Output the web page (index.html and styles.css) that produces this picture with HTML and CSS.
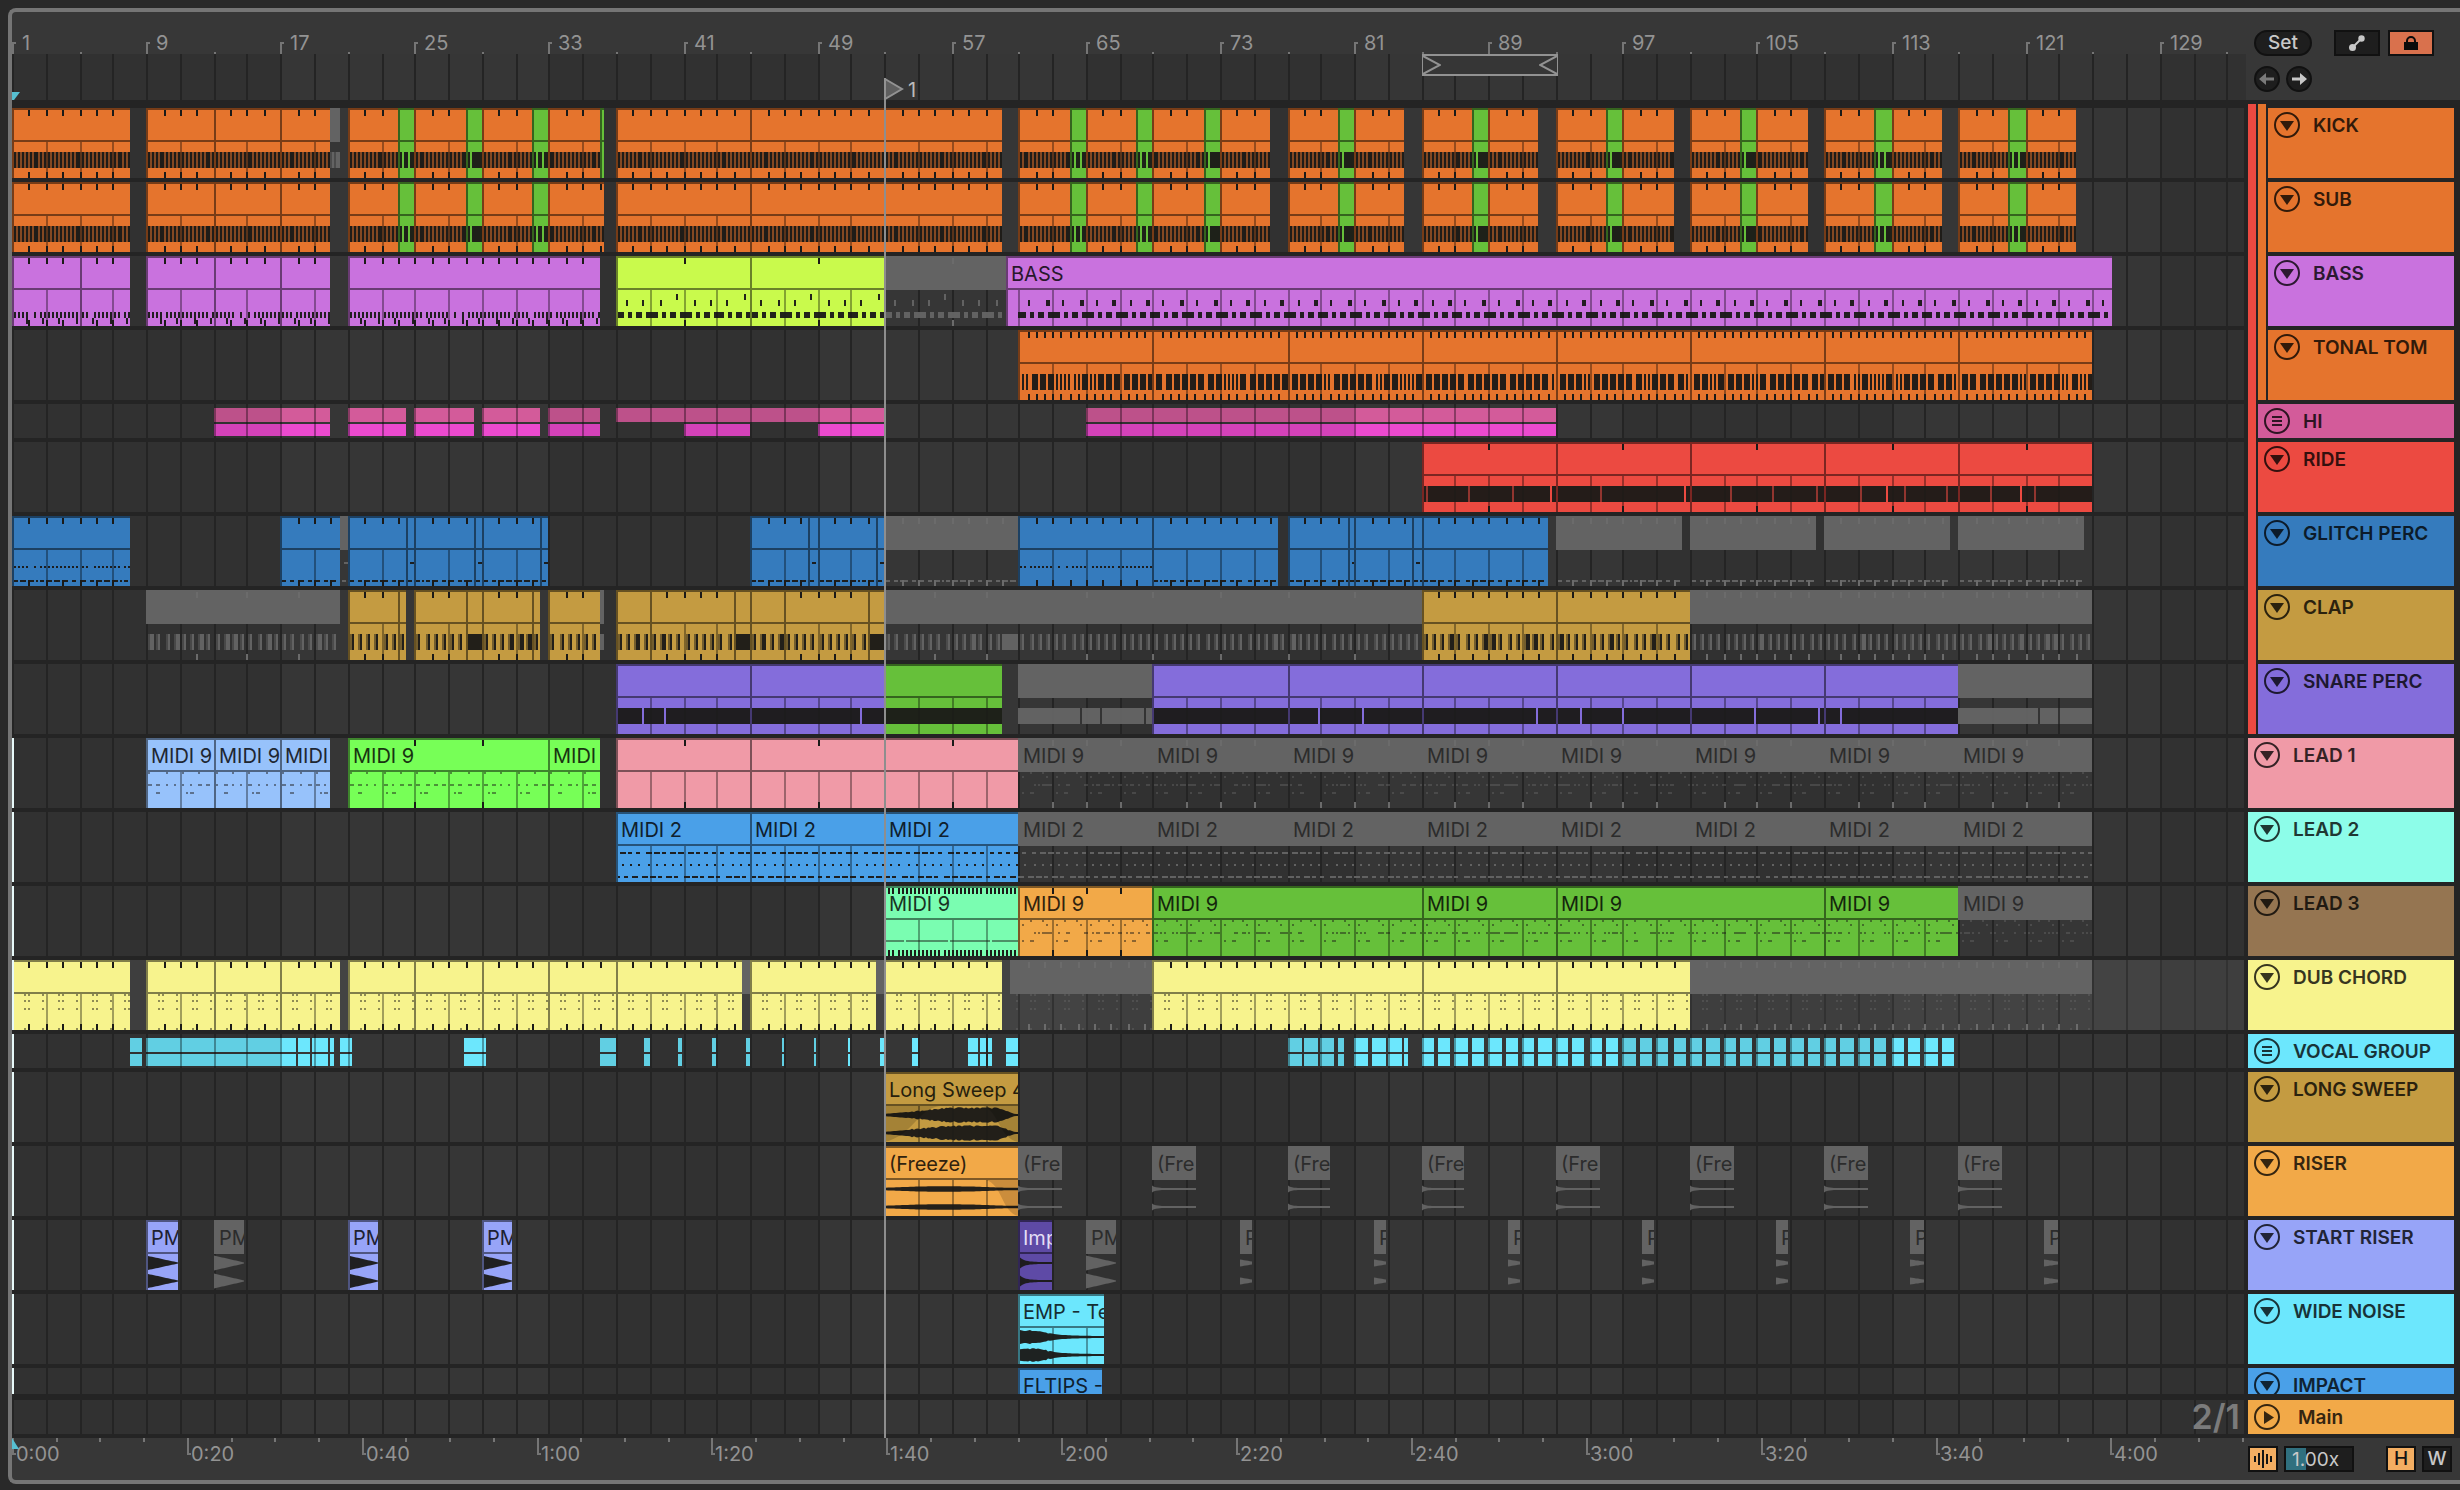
FILE: index.html
```html
<!DOCTYPE html>
<html lang="en">
<head>
  <meta charset="UTF-8">
  <title>Arrangement</title>
  <link rel="stylesheet" href="styles.css">
</head>
<body>
  <svg class="sprite" width="0" height="0" aria-hidden="true">
    <symbol id="fold" viewBox="0 0 26 26">
      <circle cx="13" cy="13" r="12" fill="none" stroke="currentColor" stroke-width="2"/>
      <path d="M6 9h14l-7 10z" fill="currentColor"/>
    </symbol>
    <symbol id="unfold" viewBox="0 0 26 26">
      <circle cx="13" cy="13" r="12" fill="none" stroke="currentColor" stroke-width="2"/>
      <path d="M10 7v13l10-6.500z" fill="currentColor"/>
    </symbol>
    <symbol id="group" viewBox="0 0 26 26">
      <circle cx="13" cy="13" r="12" fill="none" stroke="currentColor" stroke-width="2"/>
      <path d="M8 8h10v2H8zM8 12h10v2H8zM8 16h10v2H8z" fill="currentColor"/>
    </symbol>
  </svg>

  <main class="frame">
    <section class="timeline" id="timeline">
      <div class="ruler" id="beatRuler"></div>
      <div class="arrange">
        <svg class="grid" id="grid" width="100%" height="100%"></svg>
        <div class="scrub">
          <svg class="start" width="8" height="8"><path d="M0 0h8l-6 8H0z" fill="#57bfd1"/></svg>
          <div class="loop" id="loop">
            <svg width="18" height="18"><path d="M0 0l17 9L0 18" fill="none" stroke="#929292" stroke-width="2"/></svg>
            <svg width="18" height="18"><path d="M18 0L1 9l17 9" fill="none" stroke="#929292" stroke-width="2"/></svg>
          </div>
        </div>
        <div class="lanes" id="lanes"></div>
        <div class="lane main-lane"><span class="zoom">2/1</span></div>
      </div>
      <div class="ruler time" id="timeRuler">
        <svg class="start-time" width="8" height="12"><path d="M0 0l7 11H0z" fill="#57bfd1"/></svg>
      </div>
      <div class="locator" id="locator">
        <svg width="20" height="22"><path d="M1 1l17 10L1 21z" fill="#5f5f5f" stroke="#929292" stroke-width="2"/></svg>
        <span>1</span>
      </div>
    </section>

    <aside class="side">
      <div class="tools">
        <div class="tools-row">
          <button class="pill">Set</button>
          <button class="tool" aria-label="Automation mode">
            <svg width="18" height="18"><path d="M4 14L14 4" stroke="#c8c8c8" stroke-width="2"/><circle cx="4.500" cy="13.500" r="3.500" fill="#c8c8c8"/><circle cx="13.500" cy="4.500" r="3.200" fill="#c8c8c8"/></svg>
          </button>
          <button class="tool lock" aria-label="Lock envelopes">
            <svg width="18" height="18"><path d="M5 9V7a4 4 0 0 1 8 0v2" fill="none" stroke="#0b0b0b" stroke-width="2"/><path d="M2 8h14v8H2z" fill="#0b0b0b"/></svg>
          </button>
        </div>
        <div class="tools-row arrows">
          <button class="round dim" aria-label="Previous locator">
            <svg width="16" height="14"><path d="M0 7l7-6v4.500h8v3H7V13z" fill="currentColor"/></svg>
          </button>
          <button class="round" aria-label="Next locator">
            <svg width="16" height="14"><path d="M16 7L9 1v4.500H1v3h8V13z" fill="currentColor"/></svg>
          </button>
        </div>
      </div>

      <div class="headers">
        <div class="nest red">
          <div class="strip"></div>
          <div class="stack">
            <div class="nest orange">
              <div class="strip"></div>
              <div class="stack">
                <div class="track orange"><button aria-label="Fold KICK"><svg><use href="#fold"/></svg></button><span>KICK</span></div>
                <div class="track orange"><button aria-label="Fold SUB"><svg><use href="#fold"/></svg></button><span>SUB</span></div>
                <div class="track purple"><button aria-label="Fold BASS"><svg><use href="#fold"/></svg></button><span>BASS</span></div>
                <div class="track orange"><button aria-label="Fold TONAL TOM"><svg><use href="#fold"/></svg></button><span>TONAL TOM</span></div>
              </div>
            </div>
            <div class="track short pink"><button aria-label="Open HI"><svg><use href="#group"/></svg></button><span>HI</span></div>
            <div class="track red"><button aria-label="Fold RIDE"><svg><use href="#fold"/></svg></button><span>RIDE</span></div>
            <div class="track blue"><button aria-label="Fold GLITCH PERC"><svg><use href="#fold"/></svg></button><span>GLITCH PERC</span></div>
            <div class="track gold"><button aria-label="Fold CLAP"><svg><use href="#fold"/></svg></button><span>CLAP</span></div>
            <div class="track violet"><button aria-label="Fold SNARE PERC"><svg><use href="#fold"/></svg></button><span>SNARE PERC</span></div>
          </div>
        </div>
        <div class="track rose"><button aria-label="Fold LEAD 1"><svg><use href="#fold"/></svg></button><span>LEAD 1</span></div>
        <div class="track aqua"><button aria-label="Fold LEAD 2"><svg><use href="#fold"/></svg></button><span>LEAD 2</span></div>
        <div class="track brown"><button aria-label="Fold LEAD 3"><svg><use href="#fold"/></svg></button><span>LEAD 3</span></div>
        <div class="track yellow"><button aria-label="Fold DUB CHORD"><svg><use href="#fold"/></svg></button><span>DUB CHORD</span></div>
        <div class="track short cyan"><button aria-label="Open VOCAL GROUP"><svg><use href="#group"/></svg></button><span>VOCAL GROUP</span></div>
        <div class="track gold"><button aria-label="Fold LONG SWEEP"><svg><use href="#fold"/></svg></button><span>LONG SWEEP</span></div>
        <div class="track amber"><button aria-label="Fold RISER"><svg><use href="#fold"/></svg></button><span>RISER</span></div>
        <div class="track lilac"><button aria-label="Fold START RISER"><svg><use href="#fold"/></svg></button><span>START RISER</span></div>
        <div class="track cyan"><button aria-label="Fold WIDE NOISE"><svg><use href="#fold"/></svg></button><span>WIDE NOISE</span></div>
        <div class="track cut sky"><button aria-label="Fold IMPACT"><svg><use href="#fold"/></svg></button><span>IMPACT</span></div>
        <div class="track short main amber"><button aria-label="Unfold Main"><svg><use href="#unfold"/></svg></button><span>Main</span></div>
      </div>

      <div class="footer">
        <button class="small on" aria-label="Waveform zoom">
          <svg width="20" height="20"><path d="M1 7h2v6H1zM5 4h2v12H5zM9 1h2v18H9zM13 5h2v10h-2zM17 7h2v6h-2z" fill="#151515"/></svg>
        </button>
        <input class="speed" type="text" value="1.00x" aria-label="Waveform zoom factor">
        <button class="small on push">H</button>
        <button class="small">W</button>
      </div>
    </aside>
  </main>
  <script src="script.js"></script>
</body>
</html>
```
FILE: styles.css
```css
* {
  box-sizing: border-box;
}
body {
  margin: 0;
  background: #292929;
  color: #939393;
  font-family: Inter, "Liberation Sans", sans-serif;
  font-size: 20px;
  line-height: 26px;
}
button, input {
  font: inherit;
  margin: 0;
  padding: 0;
}
button {
  cursor: pointer;
}
.sprite {
  position: absolute;
}
.frame {
  display: grid;
  grid-template-columns: minmax(0, 1fr) 214px;
  margin: 8px 0 6px 8px;
  border: 4px solid #757575;
  border-right: 0;
  border-radius: 8px 0 0 8px;
  background: #373737;
  overflow: hidden;
}

/* colours */
.orange { --c: #e5742d; }
.purple { --c: #c972de; }
.pink { --c: #d35b9a; }
.red { --c: #ec4a41; }
.blue { --c: #357bbd; }
.gold { --c: #c49b41; }
.violet { --c: #846ddb; }
.rose { --c: #f09aa7; }
.aqua { --c: #8dfde9; }
.brown { --c: #957551; }
.yellow { --c: #f7f38d; }
.cyan { --c: #6ce7fd; }
.amber { --c: #f2a948; }
.lilac { --c: #97a4f8; }
.sky { --c: #4aa0e8; }
.lime { --c: #c9fa4c; }
.green { --c: #66c03a; }
.bright { --c: #77ff57; }
.pale { --c: #97c2fb; }
.mint { --c: #7afdb1; }
.indigo { --c: #5e4aa6; }

/* timeline */
.timeline {
  position: relative;
}
.ruler {
  position: relative;
  height: 42px;
  overflow: hidden;
}
.mark {
  position: absolute;
  top: 30px;
  width: 4px;
  height: 12px;
  border-left: 2px solid #757575;
  border-top: 2px solid #757575;
}
.minor {
  position: absolute;
  top: 40px;
  width: 2px;
  height: 2px;
  background: #757575;
}
.mark span {
  position: absolute;
  left: 8px;
  top: -14px;
}
.time .mark {
  top: 0;
  height: 17px;
  border-top: 0;
  border-bottom: 2px solid #757575;
}
.time .minor {
  top: 0;
  height: 4px;
}
.time .mark span {
  left: 2px;
  top: 3px;
}
.start-time {
  position: absolute;
  left: 0;
  top: 0;
}
.arrange {
  position: relative;
}
.grid {
  position: absolute;
  inset: 0;
}
.scrub {
  position: relative;
  height: 46px;
}
.start {
  position: absolute;
  left: 0;
  bottom: 0;
}
.loop {
  position: absolute;
  top: 0;
  display: flex;
  justify-content: space-between;
  height: 22px;
  border: 2px solid #929292;
  border-width: 2px 1px;
  background: #363636;
}
.lanes {
  position: relative;
  border-top: 8px solid #242424;
}
.lane {
  position: relative;
  box-sizing: content-box;
  height: 70px;
  border-bottom: 4px solid #242424;
  border-right: 2px solid #242424;
  overflow: hidden;
}
.lane.short, .main-lane {
  height: 34px;
}
.lane.cut {
  height: 26px;
  border-bottom-width: 6px;
}
.lane.picked {
  background: rgba(255, 255, 255, .065);
}
.lane.open::before {
  content: "";
  position: absolute;
  z-index: 1;
  inset: 0 auto 0 0;
  width: 2px;
  background: #e8fafa;
}
.main-lane {
  text-align: right;
}
.zoom {
  display: block;
  padding-right: 4px;
  font-size: 34px;
  line-height: 34px;
  font-weight: 600;
  color: #7b7b7b;
}
.clip {
  position: absolute;
  top: 0;
  bottom: 0;
  overflow: hidden;
  background: var(--c);
  color: color-mix(in srgb, var(--c) 20%, black);
  white-space: nowrap;
}
.clip svg {
  position: absolute;
  inset: 0;
}
.clip span {
  position: relative;
  display: block;
  padding-left: 5px;
  line-height: 36px;
}
.clip.indigo {
  color: #e3def5;
}
.edge { fill: color-mix(in srgb, var(--c) 52%, #000); }
.lines { fill: #000; opacity: .35; }
.ink { fill: #1b1a18; opacity: .96; }
.soft { fill: #1b1a18; opacity: .48; }
.lit { fill: var(--c); }
.dimlit { fill: var(--c); opacity: .55; }
.fade { fill: #000; opacity: .16; }
.shade { fill: #000; opacity: .1; }
.tick { fill: #1b1a18; }
.clip.off {
  background: linear-gradient(#636363 34px, transparent 34px);
  color: #2c2c2c;
}
.off .tick { fill: #6b6b6b; }
.off .ink { fill: #646464; }
.off .soft { fill: #626262; }
.off .lit, .off .dimlit { fill: #333; }
.clip.folder {
  background: none;
}
.folder .lower { fill: var(--lower, var(--c)); }
.folder .upper { fill: var(--c); }
.folder.pink { --lower: #ec4acf; }

.locator {
  position: absolute;
  top: 66px;
  bottom: 42px;
  display: flex;
  gap: 4px;
  border-left: 2px solid #8e8e8e;
  line-height: 24px;
  color: #bbb;
  pointer-events: none;
}
.locator svg {
  margin-left: -2px;
}

/* right column */
.side {
  display: flex;
  flex-direction: column;
  font-size: 19px;
}
.tools {
  height: 88px;
  padding: 18px 8px 0;
}
.tools-row {
  display: flex;
  gap: 8px;
}
.arrows {
  gap: 6px;
  margin-top: 10px;
}
.pill, .tool, .round, .small, .speed {
  display: flex;
  align-items: center;
  justify-content: center;
  height: 26px;
  border: 2px solid #111;
  background: #1e1e1e;
  color: #c8c8c8;
  line-height: 22px;
}
.pill {
  width: 58px;
  margin-right: 14px;
  border-radius: 13px;
  font-weight: 500;
}
.tool {
  width: 46px;
}
.lock {
  background: #d9714d;
}
.round {
  width: 26px;
  border-radius: 13px;
}
.dim {
  color: #7a7a7a;
}
.headers {
  display: flex;
  flex-direction: column;
  gap: 4px;
  padding: 8px 6px 4px 2px;
  background: #242424;
}
.nest {
  display: flex;
  gap: 2px;
}
.strip {
  width: 8px;
  margin-top: -4px;
  background: var(--c);
}
.stack {
  flex: 1;
  display: flex;
  flex-direction: column;
  gap: 4px;
}
.track {
  display: flex;
  gap: 13px;
  height: 70px;
  padding: 4px 0 0 6px;
  overflow: hidden;
  background: var(--c);
  color: color-mix(in srgb, var(--c) 22%, black);
  font-weight: 600;
  line-height: 28px;
  white-space: nowrap;
}
.track.short {
  height: 34px;
}
.track.cut {
  height: 26px;
}
.track.main {
  gap: 18px;
  margin-top: 2px;
}
.track button {
  width: 26px;
  height: 26px;
  border: 0;
  background: none;
  color: inherit;
}
.track svg {
  display: block;
  width: 26px;
  height: 26px;
}
.footer {
  display: flex;
  gap: 6px;
  padding: 8px 8px 8px 2px;
}
.small {
  width: 30px;
  font-weight: 500;
}
.on {
  background: #f4ae62;
  color: #151515;
}
.push {
  margin-left: auto;
}
.speed {
  width: 70px;
  padding-left: 6px;
  background: linear-gradient(90deg, #30707f 20px, #1e1e1e 20px);
}
```
FILE: script.js
```js
const BARS = 133.15;      // bars visible in the timeline
const SECONDS = 255.5;    // seconds visible in the timeline
let unit = 16;

// bar number -> x, kept on the 2px raster
const px = bar => 2 * Math.round((bar - 1) * unit / 2);
const rect = (x, y, w, h) => `M${x} ${y}h${w}v${h}h${-w}z`;
const rnd = n => {
  const v = Math.sin(n * 12.9898) * 43758.5453;
  return v - Math.floor(v);
};

// note patterns, add(bar, y, w, h, kind, dx)
const patterns = {
  kick(a, z, add) {
    add(a, 44, px(z) - px(a), 16, 'soft');
    for (let b = a; b < z; b += .25) add(b, 44, px(b + .25) - px(b) - 2, 16, 'ink', 2);
  },
  fill(a, z, add) {
    add(a, 44, px(z) - px(a), 16, 'ink');
  },
  gap1(a, z, add) {
    patterns.fill(a, z, add);
    add(a, 44, 2, 16, 'lit', 4);
  },
  gap2(a, z, add) {
    patterns.gap1(a, z, add);
    add(a, 44, 2, 16, 'lit', 10);
  },
  bassA(a, z, add) {
    for (let b = a; b < z; b += .25) if (rnd(b) > .08) add(b, 56, 2, 6, 'ink', 2);
    for (let b = Math.ceil(a); b < z; b++) add(b + .8, 62, 2, 6, 'ink');
  },
  bassB(a, z, add) {
    for (let b = a; b < z; b++) {
      add(b + .6, (b - a) % 4 == 3 ? 38 : 44, 2, 6, 'ink');
    }
    low(a, z, add);
  },
  bassC(a, z, add) {
    for (let b = 61; b < z; b++) add(b + .6, 44, b % 2 ? 2 : 4, 6, 'ink');
    low(61, z, add);
  },
  tom(a, z, add) {
    for (let b = a; b < z; b += .5) {
      const r = rnd(b);
      if (r < .12) { add(b, 44, 2, 16, 'ink', 4); add(b, 44, 2, 16, 'ink', 8); }
      else add(b, 44, 6, 16, 'ink', 4);
    }
  },
  ride(a, z, add) {
    patterns.fill(a, z, add);
    [85.3, 87.8, 90.4, 95.7, 103.4, 105.9, 108.5, 111.2, 113.8, 116.3, 118.9, 121.5]
      .forEach(b => b >= a && b < z && add(b, 44, 2, 16, 'dimlit'));
    [92.7, 100.7, 112.7, 120.7].forEach(b => b >= a && b < z && add(b, 44, 2, 16, 'lit'));
  },
  snare(a, z, add) {
    patterns.fill(a, z, add);
    [38.6, 39.9, 51.6, 53, 64.6, 65.9, 68.5, 78.8, 81.5, 91.8, 94.5, 97, 104.8, 108.6, 109.9, 121.7, 123]
      .forEach(b => b > a && b < z && add(b, 44, 2, 16, 'lit'));
  },
  dots(a, z, add) {
    for (let b = a; b < z; b += .25) if (rnd(b) > .08) add(b, 50, 2, 2, 'ink', 2);
  },
  perc(a, z, add) {
    for (let b = a; b < z; b += .5) {
      add(b, 64, 4, 2, 'ink', 2);
      if (rnd(b * 3) > .5) add(b, 64, 2, 2, 'ink', 8);
    }
  },
  both(a, z, add) {
    patterns.dots(a, z, add);
    patterns.perc(a, z, add);
  },
  blip(a, z, add) {
    add(a, 46, 4, 2, 'ink', 4);
    patterns.perc(a, z, add);
  },
  clap(a, z, add) {
    for (let b = a; b < z; b += .5) {
      const dense = rnd(b * 7) < .12;
      add(b, 44, 2, 16, 'soft', 2);
      add(b, 44, dense ? 4 : 2, 16, 'ink', 4);
    }
  },
  blue(a, z, add) {
    for (let b = a; b < z; b += .5) {
      add(b, 46, rnd(b) > .6 ? 2 : 4, 2, 'soft', 2);
      if (b % 1 == 0) add(b, 34, 2, 2, 'soft', 2);
      if (b % 2 == 1) add(b, 54, 4, 2, 'soft', 10);
      if (b % 2 == .5) add(b, 54, 2, 2, 'soft', 14);
    }
  },
  lead(a, z, add) {
    for (let b = a; b < z; b += .25) {
      if (rnd(b) > .3) add(b, 46, rnd(b * 2) > .7 ? 4 : 2, 2, 'soft', 2);
    }
    for (let b = a; b < z; b++) {
      add(b, 38, 2, 2, 'soft', b % 2 ? 4 : 10);
      add(b, 34, 2, 2, 'soft', b % 2 ? 12 : 6);
      if (b % 2) add(b, 54, 2, 2, 'soft', 4);
      if (b % 2) add(b, 54, 4, 2, 'soft', 12);
    }
  },
  lead2(a, z, add) {
    for (let b = a; b < z; b += .5) {
      add(b, 40, rnd(b) > .5 ? 6 : 4, 2, 'ink', 4);
      add(b, 52, 2, 2, 'ink', 6);
      add(b, 64, rnd(b * 5) > .4 ? 6 : 4, 2, 'ink', 0);
    }
  },
  hold(a, z, add) {
    add(a, 54, 18, 2, 'soft', 2);
    add(a, 54, 42, 2, 'soft', 22);
    add(a, 54, 40, 2, 'soft', 66);
    add(a, 54, 26, 2, 'soft', 108);
  },
  chord(a, z, add) {
    for (let b = a - (a - 1) % 2; b < z; b += 2) {
      [12, 16, 30].forEach(dx => [34, 40, 48].forEach(y => add(b, y, 2, 2, 'soft', dx)));
      [12, 30].forEach(dx => add(b, 68, 2, 2, 'soft', dx));
    }
  }
};

function low(a, z, add) {
  for (let b = a; b < z; b += 2) {
    add(b, 56, 8, 6, 'ink');
    add(b, 56, 4, 6, 'ink', 12);
    add(b, 56, 6, 6, 'ink', 20);
    add(b, 56, 4, 6, 'ink', 30);
  }
}

// amplitude of the audio clips, t runs 0..1
const waves = {
  sweep: t => t < .5 ? 1 + t * 12 : t < .85 ? 7 : Math.max(1, 7 - (t - .85) * 48),
  freeze: t => 1.200 + 1.600 * Math.sin(Math.min(1, t * 1.100) * Math.PI),
  hit: t => 1 + 2.500 * Math.exp(-t * 14),
  pm: t => 7 * (1 - t) + .500,
  imp: t => 1 + 7 * Math.exp(-t * 7),
  p: t => 3.500 - 2 * t,
  emp: t => t < .25 ? 6.500 : 1 + 5.500 * Math.exp(-(t - .25) * 6)
};

function wave(name, w) {
  let d = '';
  [43, 61].forEach(mid => {
    const up = [], down = [];
    for (let x = 0; x <= w; x += 2) {
      let amp = waves[name](x / w);
      if (amp > 3 && (name == 'sweep' || name == 'emp')) amp += rnd(x + mid) * 1.5 - .7;
      up.push(`${x} ${(mid - amp).toFixed(1)}`);
      down.unshift(`${x} ${(mid + amp).toFixed(1)}`);
    }
    d += 'M' + up.concat(down).join('L') + 'z';
  });
  let svg = `<path class="ink" d="${d}"/>`;
  if (name == 'sweep') {
    svg += `<path class="fade" d="M0 34H${w * .42}C${w * .25} 36 ${w * .22} 64 0 70z"/>`;
    svg += `<path class="fade" d="M${w} 34H${w * .74}C${w * .85} 38 ${w * .86} 66 ${w} 70z"/>`;
  }
  if (name == 'freeze') svg += `<path class="fade" d="M${w} 34H${w * .76}C${w * .88} 38 ${w * .88} 66 ${w} 70z"/>`;
  return svg;
}

// clip: start, end, colour, pattern, tick step, title
const c = (a, z, color, notes, tick, title) => ({ a, z, color, notes, tick, title });
const run = (starts, z, ...rest) => starts.map((a, i) => c(a, starts[i + 1] || z, ...rest));
const eights = (from, to) => {
  const list = [];
  for (let b = from; b < to; b += 8) list.push(b);
  return list;
};

function drums(kick) {
  const list = [c(1, 8, 'orange', 'kick', 1), ...run([9, 13, 17], 20, 'orange', 'kick', 1)];
  if (kick) list.push(c(20, 20.6, 'off', 'kick'));
  const greens = { 24: 'gap2', 28: 'gap1', 32: 'gap2', 64: 'gap2', 68: 'gap2', 72: 'gap1', 80: 'gap1', 88: 'gap1', 96: 'gap1', 104: 'gap1', 112: 'gap2', 120: 'gap2' };
  Object.keys(greens).map(Number).forEach(g => {
    list.push(c(g - 3, g, 'orange', 'kick', 1), c(g, g + 1, 'green', greens[g]));
  });
  list.push(c(33, 36.25, 'orange', 'kick', 1));
  if (kick) list.push(c(36, 36.25, 'green'));
  list.push(c(37, 45, 'orange', 'kick', 1), c(45, 60, 'orange', 'kick', 1), c(73, 76, 'orange', 'kick', 1));
  [81, 89, 97, 105, 113, 121].forEach(b => list.push(c(b, b + 3, 'orange', 'kick', 1)));
  return list;
}

const vocals = [
  [8, 8.75], [9, 17.95], [18.05, 18.8], [18.9, 19.85], [20, 20.2], [20.55, 21.3], [27.95, 29.3], [36.05, 37],
  [38.7, 39], [40.75, 40.9], [42.7, 43], [44.8, 45], [46.85, 47.05], [48.75, 48.9], [50.8, 51], [52.75, 53],
  [54.7, 55.05], [58, 58.6], [58.75, 59.1], [59.2, 59.35], [60.3, 61], [77, 77.9], [78.05, 78.8], [78.9, 79.85],
  [80, 80.35], [81, 81.85], [82, 82.85], [83, 83.9], [84, 84.25]
];
for (let b = 85; b < 117; b++) vocals.push([b, b + .75]);

const tracks = [
  { clips: drums(true) },
  { clips: drums(false) },
  { clips: [
    ...run([1, 5], 8, 'purple', 'bassA', 1), ...run([9, 13, 17], 20, 'purple', 'bassA', 1),
    c(21, 36, 'purple', 'bassA', 1), ...run([37, 45], 53, 'lime', 'bassB', 4),
    c(53, 60.2, 'off', 'bassB', 4), c(60.2, 126.2, 'purple', 'bassC', 0, 'BASS')
  ] },
  { clips: run(eights(61, 125), 125, 'orange', 'tom', .5) },
  { size: 'short', folder: 'pink', spans: [
    [13, 20], [21, 24.5], [25, 28.5], [29, 32.5], [33, 36],
    [37, 41, 1], [41, 45], [45, 49, 1], [49, 53], [65, 93]
  ] },
  { clips: run(eights(85, 125), 125, 'red', 'ride', 4) },
  { clips: [
    c(1, 8, 'blue', 'both', 1), c(17, 20.55, 'blue', 'perc', 1), c(20.55, 21, 'off', 'blip'),
    c(21, 24.5, 'blue', 'perc', 1), c(24.5, 25, 'blue', 'blip'),
    c(25, 28.5, 'blue', 'perc', 1), c(28.5, 29, 'blue', 'blip'),
    c(29, 32.5, 'blue', 'perc', 1), c(32.5, 33, 'blue', 'blip'),
    c(45, 48.5, 'blue', 'perc', 1), c(48.5, 49, 'blue', 'blip'),
    c(49, 52.5, 'blue', 'perc', 1), c(52.5, 53, 'blue', 'blip'), c(53, 61, 'off', 'perc', 1),
    c(61, 69, 'blue', 'dots', 1), c(69, 76.5, 'blue', 'perc', 1),
    c(77, 80.6, 'blue', 'perc', 1), c(80.6, 81, 'blue', 'blip'),
    c(81, 84.5, 'blue', 'perc', 1), c(84.5, 85, 'blue', 'blip'), c(85, 92.5, 'blue', 'perc', 1),
    ...[93, 101, 109, 117].map(b => c(b, b + 7.5, 'off', 'perc', 1))
  ] },
  { clips: [
    c(9, 20.6, 'off', 'clap', 3), c(21, 24, 'gold', 'clap', 1), c(24, 24.5, 'gold', 'clap'),
    c(25, 28, 'gold', 'clap', 1), c(28, 29, 'gold', 'fill'), c(29, 32, 'gold', 'clap', 1), c(32, 32.5, 'gold', 'clap'),
    c(33, 36, 'gold', 'clap', 1), c(36, 36.25, 'off', 'fill'),
    c(37, 39, 'gold', 'clap'), c(39, 44, 'gold', 'clap', 1), c(44, 45, 'gold', 'fill'),
    c(45, 47, 'gold', 'clap'), c(47, 52, 'gold', 'clap', 1), c(52, 53, 'gold', 'fill'),
    c(53, 60, 'off', 'clap', 3), c(60, 61, 'off', 'fill'), c(61, 85, 'off', 'clap', 4),
    ...run([85, 93], 101, 'gold', 'clap', 1), ...run([101, 109, 117], 125, 'off', 'clap', 1)
  ] },
  { clips: [
    ...run([37, 45], 53, 'violet', 'snare'), c(53, 60, 'green', 'fill'), c(61, 69, 'off', 'snare'),
    ...run(eights(69, 117), 117, 'violet', 'snare'), c(117, 125, 'off', 'snare')
  ] },
  { open: true, clips: [
    ...run([9, 13, 17], 20, 'pale', 'blue', 0, 'MIDI 9'), c(21, 33, 'bright', 'blue', 4, 'MIDI 9'),
    c(33, 36, 'bright', 'blue', 0, 'MIDI 9'), ...run([37, 45, 53], 61, 'rose', '', 4),
    ...run(eights(61, 125), 125, 'off', 'lead', 2, 'MIDI 9')
  ] },
  { open: true, clips: [
    ...run([37, 45, 53], 61, 'sky', 'lead2', 0, 'MIDI 2'),
    ...run(eights(61, 125), 125, 'off', 'lead2', 0, 'MIDI 2')
  ] },
  { open: true, clips: [
    c(53, 61, 'mint', 'hold', .25, 'MIDI 9'), c(61, 69, 'amber', 'lead', 2, 'MIDI 9'),
    ...run([69, 85, 93, 109], 117, 'green', 'lead', 0, 'MIDI 9'), c(117, 125, 'off', 'lead', 0, 'MIDI 9')
  ] },
  { open: true, picked: true, clips: [
    c(1, 8, 'yellow', 'chord', 1), ...run([9, 13, 17], 20.6, 'yellow', 'chord', 1),
    ...run([21, 25, 29, 33], 37, 'yellow', 'chord', 1), c(37, 44.5, 'yellow', 'chord', 1), c(44.5, 45, 'off'),
    c(45, 52.5, 'yellow', 'chord', 1), c(52.5, 53, 'off'), c(53, 60, 'yellow', 'chord', 1),
    c(60.5, 69, 'off', 'chord', 1), ...run([69, 85, 93], 101, 'yellow', 'chord', 1), c(101, 125, 'off', 'chord', 1)
  ] },
  { open: true, size: 'short', folder: 'cyan', spans: vocals },
  { open: true, clips: [c(53, 61, 'gold', 'sweep', 0, 'Long Sweep 4')] },
  { open: true, clips: [
    c(53, 61, 'amber', 'freeze', 0, '(Freeze)'),
    ...eights(61, 125).map(b => c(b, b + 2.6, 'off', 'hit', 0, '(Fre'))
  ] },
  { open: true, clips: [
    ...[9, 21, 29].map(b => c(b, b + 1.85, 'lilac', 'pm', 0, 'PM')), c(13, 14.8, 'off', 'pm', 0, 'PM'),
    c(61, 63, 'indigo', 'imp', 0, 'Imp'), c(65, 66.8, 'off', 'pm', 0, 'PM'),
    ...eights(74.15, 125).map(b => c(b, b + .75, 'off', 'p', 0, 'P'))
  ] },
  { open: true, clips: [c(61, 66.1, 'cyan', 'emp', 0, 'EMP - Te')] },
  { open: true, size: 'cut', clips: [c(61, 66, 'sky', '', 0, 'FLTIPS -')] }
];

function inner(a, z, step) {
  const list = [];
  for (let b = a + step; b < z - .05; b += step) list.push(b);
  return list;
}

function gridLines(a, z, y, h) {
  let d = '';
  for (let b = 1; b < z; b += 2) if (b > a) d += rect(px(b) - px(a), y, 2, h);
  return d;
}

function drawClip(clip) {
  const { a, z, color, notes, tick, title } = clip;
  const w = px(z) - px(a);
  const off = color == 'off';
  let svg = '';
  if (!off) {
    svg += `<path class="lines" d="${gridLines(a, z, 34, 36)}"/>`;
  }
  if (patterns[notes]) {
    patterns[notes](a, z, (bar, y, nw, h, kind, dx = 0) => {
      svg += `<path class="${kind}" d="${rect(px(bar) - px(a) + dx, y, nw, h)}"/>`;
    });
  }
  if (waves[notes]) svg += wave(notes, w);
  if (!off) svg += `<path class="edge" d="${rect(0, 0, w, 2)}${rect(0, 2, 2, 68)}${rect(2, 32, w, 2)}"/>`;
  if (tick) {
    const d = inner(a, z, tick).map(b => rect(px(b) - px(a), 2, 2, 6) + rect(px(b) - px(a), 64, 2, 6)).join('');
    svg += `<path class="tick" d="${d}"/>`;
  }
  return `<div class="clip ${color}" style="left:${px(a)}px;width:${w}px">` +
    `<svg width="${w}" height="70">${svg}</svg>${title ? `<span>${title}</span>` : ''}</div>`;
}

function drawFolder(color, [a, z, single]) {
  const w = px(z) - px(a);
  const body = (y, h, cls) => {
    let out = `<path class="${cls}" d="${rect(0, y, w, h)}"/>`;
    for (let b = 1; b < z; b += 32) {
      const from = Math.max(a, b), to = Math.min(z, b + 16);
      if (to > from) out += `<path class="shade" d="${rect(px(from) - px(a), y, px(to) - px(from), h)}"/>`;
    }
    let d = '';
    for (let b = 1; b < z; b += 2) if (b >= a) d += rect(px(b) - px(a), y, 2, h);
    return out + `<path class="lines" d="${d}"/>`;
  };
  const svg = body(4, 14, 'upper') + (single ? '' : body(20, 12, 'lower'));
  return `<div class="clip folder ${color}" style="left:${px(a)}px;width:${w}px"><svg width="${w}" height="34">${svg}</svg></div>`;
}

function render() {
  const width = document.getElementById('timeline').clientWidth;
  unit = width / BARS;

  let grid = '';
  for (let b = 1; b < BARS + 1; b += 16) {
    const fill = (b - 1) % 32 ? '#363636' : '#313131';
    grid += `<rect x="${px(b)}" width="${px(b + 16) - px(b)}" height="100%" fill="${fill}"/>`;
  }
  for (let b = 1; b < BARS + 1; b += 2) {
    grid += `<rect x="${px(b)}" width="2" height="100%" fill="#242424"/>`;
  }
  document.getElementById('grid').innerHTML = grid;

  let marks = '';
  for (let b = 1; b < BARS; b += 4) {
    marks += (b - 1) % 8
      ? `<div class="minor" style="left:${px(b)}px"></div>`
      : `<div class="mark" style="left:${px(b)}px"><span>${b}</span></div>`;
  }
  document.getElementById('beatRuler').innerHTML = marks;

  document.querySelectorAll('.time div').forEach(el => el.remove());
  let times = '';
  for (let s = 0; s < SECONDS; s += 5) {
    const x = Math.round(s / SECONDS * width);
    const label = Math.floor(s / 60) + ':' + String(s % 60).padStart(2, '0');
    times += s % 20
      ? `<div class="minor" style="left:${x}px"></div>`
      : `<div class="mark" style="left:${x}px"><span>${label}</span></div>`;
  }
  document.getElementById('timeRuler').insertAdjacentHTML('afterbegin', times);

  document.getElementById('lanes').innerHTML = tracks.map(t => {
    const cls = ['lane', t.size, t.open && 'open', t.picked && 'picked'].filter(Boolean).join(' ');
    const body = t.folder ? t.spans.map(s => drawFolder(t.folder, s)) : t.clips.map(drawClip);
    return `<div class="${cls}">${body.join('')}</div>`;
  }).join('');

  const loop = document.getElementById('loop');
  loop.style.left = px(85) + 'px';
  loop.style.width = px(93) - px(85) + 2 + 'px';
  document.getElementById('locator').style.left = px(53) + 'px';
}

render();
window.addEventListener('resize', render);
```
